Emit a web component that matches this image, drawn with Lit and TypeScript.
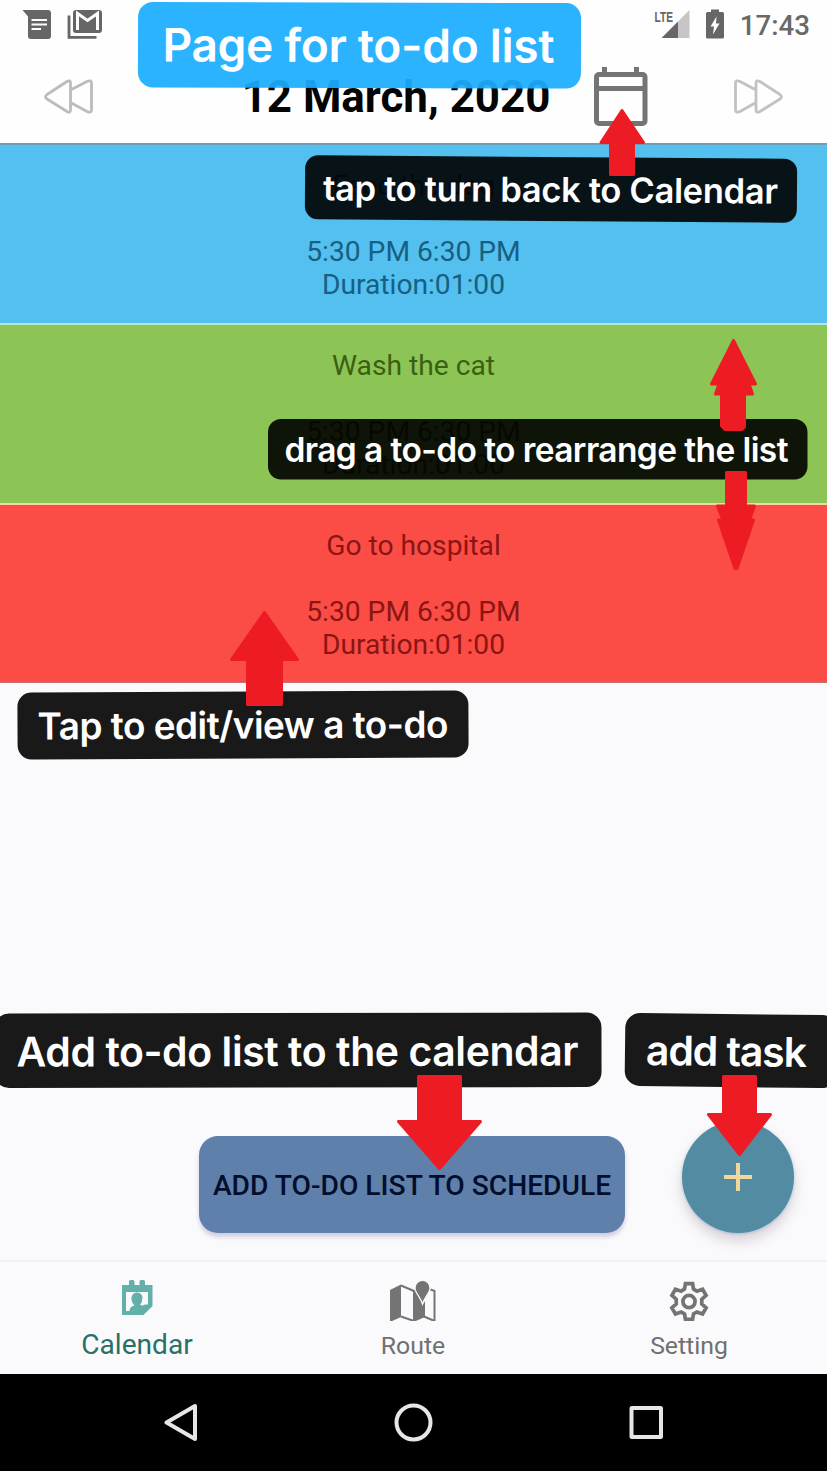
import { LitElement, html, svg, css } from "lit";
import { customElement, property } from "lit/decorators.js";

interface Task { title: string; tone: string; }
interface Note {
  text: string; x: number; y: number; w: number; h: number; r: number; turn: number;
  size: number; tx: number; ty: number; tw: number; blue?: boolean;
}

const TASKS: Task[] = [
  { title: "Feed the dog", tone: "blue" },
  { title: "Wash the cat", tone: "green" },
  { title: "Go to hospital", tone: "red" },
];

const NOTES: Note[] = [
  { text: "Page for to-do list", x: 138, y: 2.5, w: 443, h: 85.5, r: 15, turn: 0.15, size: 46, tx: 162.5, ty: 62, tw: 392, blue: true },
  { text: "tap to turn back to Calendar", x: 305, y: 157, w: 492, h: 64, r: 13, turn: 0.42, size: 34.5, tx: 323, ty: 202, tw: 455 },
  { text: "drag a to-do to rearrange the list", x: 268, y: 419, w: 539.5, h: 60.5, r: 13, turn: 0, size: 33.5, tx: 284.5, ty: 462, tw: 504 },
  { text: "Tap to edit/view a to-do", x: 17.5, y: 691.5, w: 451, h: 67, r: 14, turn: -0.27, size: 37, tx: 37.5, ty: 738.5, tw: 411 },
  { text: "Add to-do list to the calendar", x: -6, y: 1013, w: 607.5, h: 74.5, r: 15, turn: -0.1, size: 41, tx: 16.5, ty: 1066, tw: 562 },
  { text: "add task", x: 625, y: 1014, w: 212, h: 73, r: 15, turn: 0.7, size: 41, tx: 646, ty: 1066, tw: 161 },
];

const ARROWS: string[] = [
  "622,110.5 643.5,142.5 633.5,142.5 633.5,174.5 610.5,174.5 610.5,142.5 601,142.5",
  "733.5,340.5 755.5,384 749,384 752.5,394 744.5,394 744.5,427 742,429.5 725,429.5 721.5,426 721.5,394 715.5,394 719,384 711.5,384",
  "726.5,472.5 745.5,472.5 745.5,506 754.5,506 749.5,520 753.5,520 737,568.5 735,568.5 718.5,520 723,520 717.5,506 726.5,506",
  "264.5,612.5 297.5,659.5 281.5,659.5 281.5,704.5 247.5,704.5 247.5,659.5 231.5,659.5",
  "418.5,1076.5 460.5,1076.5 460.5,1121.5 480.5,1121.5 439.5,1168.5 398.5,1121.5 418.5,1121.5",
  "723.5,1076.5 755.5,1076.5 755.5,1114.5 770.5,1114.5 739.5,1154.5 708.5,1114.5 723.5,1114.5",
];

@customElement("task-row")
class TaskRow extends LitElement {
  @property() title = "";
  static styles = css`
    :host { display: block; text-align: center; }
    .row { padding-top: 24px; height: 154px; font: 400 28.2px/33px Roboto, sans-serif; }
    .name { margin-bottom: 33px; }
  `;
  render() {
    return html`<div class="row">
      <div class="name">${this.title}</div>
      <div>5:30 PM 6:30 PM</div>
      <div>Duration:01:00</div>
    </div>`;
  }
}

@customElement("app-root")
class AppRoot extends LitElement {
  static styles = css`
    :host { display: block; position: relative; width: 827px; height: 1471px; overflow: hidden; background: #fafafc; font-family: Roboto, sans-serif; }
    svg { display: block; flex: none; }
    .screen { display: flex; flex-direction: column; height: 1471px; }
    .status { display: flex; align-items: flex-start; height: 50px; background: #fefefe; padding: 0 17px 0 22px; }
    .status .gap { flex: 1; }
    .status .time { font-size: 27.7px; font-weight: 500; line-height: 52px; color: #696969; }
    .head { display: flex; align-items: flex-start; background: #fefefe; border-bottom: 2px solid #6f9db6; box-sizing: border-box; height: 95px; padding: 0 44px 0 43px; }
    .head h1 { flex: 1; margin: 0; padding-left: 105px; text-align: center; font-size: 43.9px; line-height: 94px; font-weight: 700; color: #040404; white-space: nowrap; }
    .list { display: flex; flex-direction: column; }
    .blue { background: #53c0ef; color: #175f83; border-bottom: 2px solid #b5e8d5; }
    .green { background: #8cc555; color: #3b6011; border-bottom: 2px solid #f5d5a5; }
    .red { background: #fb4c46; color: #8b1513; height: 177px; border-bottom: 1px solid #c56f75; }
    .actions { flex: 1; display: flex; justify-content: flex-end; align-items: flex-end; padding: 0 33px 27px 0; gap: 57px; }
    .add { display: flex; align-items: center; justify-content: center; width: 426px; height: 97px; border-radius: 19px; background: #5e80aa; color: #020e2b; font-size: 28.2px; font-weight: 500; white-space: nowrap; box-shadow: 0 4px 4px rgba(110, 90, 160, .28); padding-top: 2px; box-sizing: border-box; }
    .fab { width: 112px; height: 112px; border-radius: 50%; background: #538ba3; display: flex; align-items: center; justify-content: center; box-shadow: 0 8px 14px rgba(100, 70, 90, .22), 0 1px 3px rgba(120, 180, 230, .5); }
    .tabs { display: grid; grid-template-columns: 274px 278px 274px; height: 114px; border-top: 2px solid #f1f1f3; box-sizing: border-box; color: #707070; font-size: 24.8px; }
    .tab { display: flex; flex-direction: column; align-items: center; padding-top: 15px; }
    .tab span { line-height: 30px; margin-top: 10px; }
    .tab.on { color: #297067; font-size: 28.1px; }
    .tab.on span { margin-top: 9px; }
    .nav { display: flex; justify-content: center; height: 97px; background: #000; }
    .layer { position: absolute; left: 0; top: 0; }
    .dark { fill: #000; fill-opacity: .9; }
    .sky { fill: #1cadff; fill-opacity: .93; }
    .note { fill: #fff; font-family: Inter, sans-serif; font-weight: 600; }
    .arrow { fill: #ed1c24; stroke: #ed1c24; stroke-width: 3; stroke-linejoin: round; }
    .lte { font: 700 15px "Liberation Sans", sans-serif; fill: #666; }
  `;

  private status() {
    return html`<div class="status">
      <svg width="82" height="44" viewBox="22 0 82 44">
        <path fill="#666" d="M22.500 10H48a3 3 0 0 1 3 3V36a3 3 0 0 1-3 3H31a3 3 0 0 1-3-3V16.500Z"/>
        <path stroke="#fefefe" stroke-width="2.200" d="M31.500 20H47M31.500 24.500H47M31.500 29H41"/>
        <path fill="none" stroke="#666" stroke-width="2.800" d="M69 15.500V37.300H96.500"/>
        <rect x="73" y="10" width="29" height="23" rx="3" fill="#666"/>
        <path fill="none" stroke="#fefefe" stroke-width="3" d="M77.500 30V13.500L87.500 20.500L97.500 13.500V30"/>
      </svg>
      <div class="gap"></div>
      <svg width="86" height="44" viewBox="654 0 86 44">
        <text class="lte" x="654.500" y="22" textLength="18.500" lengthAdjust="spacingAndGlyphs">LTE</text>
        <path fill="#c6c6c6" d="M689.500 10V38H678V21.500Z"/>
        <path fill="#666" d="M678 21.500V38H661.500Z"/>
        <path fill="#666" d="M711 9.500h8v2.500h3.500a1.500 1.500 0 0 1 1.500 1.500V37a1.500 1.500 0 0 1-1.500 1.500H707.500A1.500 1.500 0 0 1 706 37V13.500a1.500 1.500 0 0 1 1.500-1.500H711Z"/>
        <path fill="#fefefe" d="M716.500 16.500L710.500 26.500H714L713 34.500L719.500 23.500H716Z"/>
      </svg>
      <div class="time">17:43</div>
    </div>`;
  }

  private head() {
    return html`<div class="head">
      <svg width="52" height="70" viewBox="43 50 52 70"><path fill="none" stroke="#bcbcbc" stroke-width="2.800" stroke-linejoin="round"
        d="M47 94.500L67 81.500Q70.500 79.500 70.500 83V90L87 81.500Q91.500 79.500 91.500 83V110Q91.500 113.500 87 111.500L70.500 102.500V110Q70.500 113.500 67 111.500L47 99Q44 96.800 47 94.500ZM70.500 90V102.500"/></svg>
      <h1>12 March, 2020</h1>
      <svg width="141" height="80" viewBox="592 50 141 80">
        <rect x="596.500" y="74.500" width="48.500" height="49" rx="2.500" fill="none" stroke="#747474" stroke-width="5"/>
        <path stroke="#747474" stroke-width="5" d="M596 88.500H645M604.500 67V75M636.500 67V75"/>
      </svg>
      <svg width="50" height="70" viewBox="734 50 50 70"><path fill="none" stroke="#c2c2c2" stroke-width="2.800" stroke-linejoin="round"
        d="M781 94.500L761 81.500Q757 79.500 757 83V90L741 81.500Q736.500 79.500 736.500 83V110Q736.500 113.500 741 111.500L757 102.500V110Q757 113.500 761 111.500L781 99Q784 96.800 781 94.500ZM757 90V102.500"/></svg>
    </div>`;
  }

  private tabs() {
    return html`<div class="tabs">
      <div class="tab on">
        <svg width="34" height="44" viewBox="120.500 1277 34 44">
          <path fill="#63b0aa" fill-rule="evenodd" d="M122.500 1285H129.500V1281.500a1.500 1.500 0 0 1 1.500-1.500h2.500a1.500 1.500 0 0 1 1.500 1.500V1285H140V1281.500a1.500 1.500 0 0 1 1.500-1.500H144a1.500 1.500 0 0 1 1.500 1.500V1285H153V1306L144 1315H122.500ZM126.500 1292V1311H130Q130 1306.500 135 1305.500Q131.500 1302 132 1297Q133.500 1292.500 137.500 1292.500Q142 1292.500 143 1297Q143 1302 140.500 1305Q144 1306 145.500 1304.500H148.500V1292Z"/>
        </svg>
        <span>Calendar</span>
      </div>
      <div class="tab">
        <svg width="48" height="44" viewBox="389 1277 48 44">
          <path fill="#747474" d="M390 1290L401 1284.500V1317L390 1322Z"/>
          <path fill="none" stroke="#747474" stroke-width="2" d="M401 1285.500L414 1291V1321L401 1316.500M424 1316.500L434.500 1321V1291L430.500 1289.500"/>
          <path fill="#747474" d="M413.500 1291L416 1290L422.500 1305L425 1301V1317L413.500 1322Z"/>
          <path fill="#747474" stroke="#fafafc" stroke-width="1.200" d="M422.500 1304C420.500 1297 415 1293 415 1288a7.500 7.500 0 0 1 15 0C430 1293 424.500 1297 422.500 1304Z"/>
        </svg>
        <span>Route</span>
      </div>
      <div class="tab">
        <svg width="46" height="44" viewBox="0.300 -0.500 23.400 22.380">
          <g transform="translate(12 12)" fill="none" stroke="#747474" stroke-width="1.900" stroke-linejoin="miter">
            <circle r="3.100"/>
            <path d="M-1.800-9.100H1.800L2.300-6.300L4-5.300L6.900-6.300L8.700-3.200L6.500-1.200V1.200L8.700 3.200L6.900 6.300L4 5.300L2.300 6.300L1.800 9.100H-1.800L-2.300 6.300L-4 5.300L-6.900 6.300L-8.700 3.200L-6.500 1.200V-1.200L-8.700-3.200L-6.900-6.300L-4-5.300L-2.300-6.300Z"/>
          </g>
        </svg>
        <span>Setting</span>
      </div>
    </div>`;
  }

  private note(n: Note) {
    const turn = `rotate(${n.turn} ${n.x + n.w / 2} ${n.y + n.h / 2})`;
    return svg`<g transform=${turn}>
      <rect class=${n.blue ? "sky" : "dark"} x=${n.x} y=${n.y} width=${n.w} height=${n.h} rx=${n.r}></rect>
      <text class="note" x=${n.tx} y=${n.ty} font-size=${n.size} textLength=${n.tw} lengthAdjust="spacing">${n.text}</text>
    </g>`;
  }

  render() {
    return html`
      <div class="screen">
        ${this.status()}
        ${this.head()}
        <div class="list">${TASKS.map((t) => html`<task-row class=${t.tone} .title=${t.title}></task-row>`)}</div>
        <div class="actions">
          <div class="add">ADD TO-DO LIST TO SCHEDULE</div>
          <div class="fab"><svg width="28" height="28" viewBox="0 0 28 28"><path stroke="#f0d79c" stroke-width="4" d="M14 0V28M0 14H28"/></svg></div>
        </div>
        ${this.tabs()}
        <div class="nav">
          <svg width="500" height="97" viewBox="164 1374 500 97" fill="none" stroke="#e6e6e6" stroke-width="4" stroke-linejoin="round">
            <path d="M195 1406V1439L166.500 1422.500Z"/>
            <circle cx="413.500" cy="1422.500" r="17"/>
            <rect x="631.500" y="1408" width="29.500" height="29" rx="0.500"/>
          </svg>
        </div>
      </div>
      <svg class="layer" width="827" height="1471" viewBox="0 0 827 1471">
        ${NOTES.map((n) => this.note(n))}
        ${ARROWS.map((p) => svg`<polygon class="arrow" points=${p}></polygon>`)}
      </svg>`;
  }
}
